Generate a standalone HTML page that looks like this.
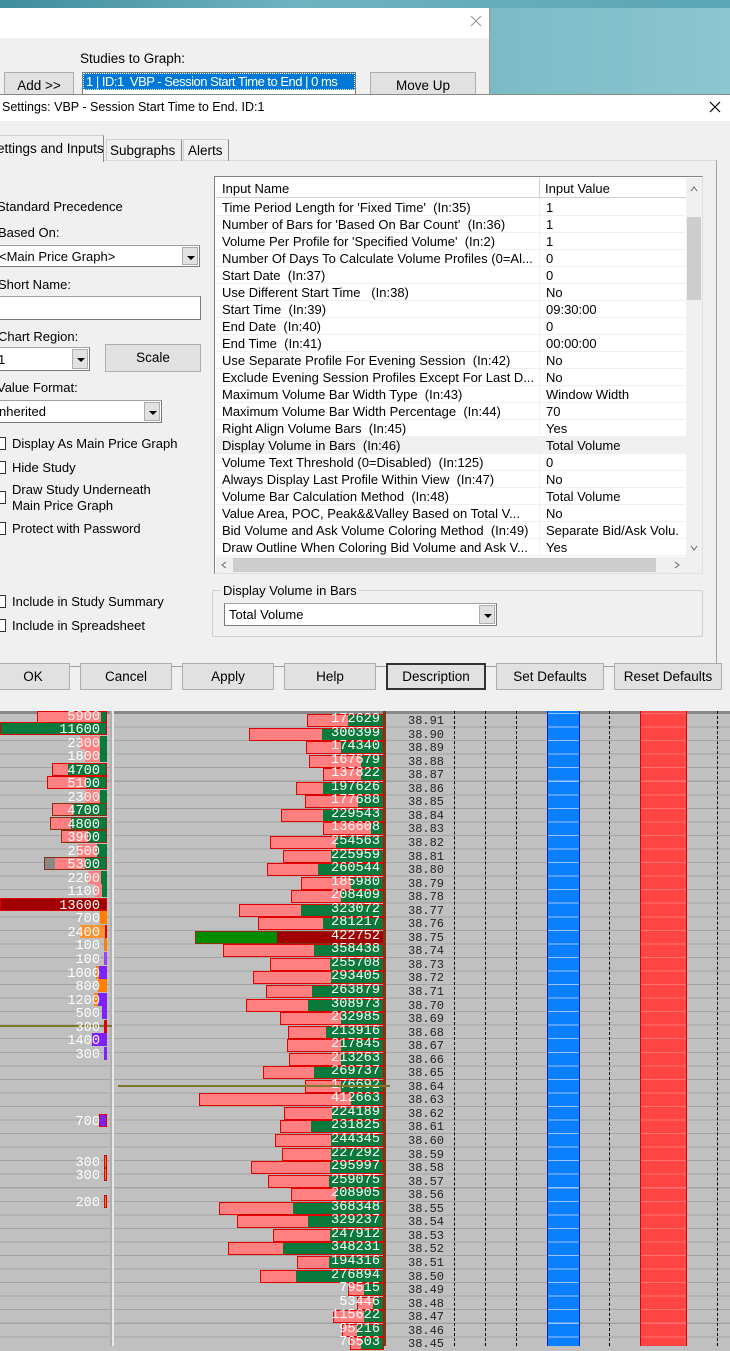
<!DOCTYPE html>
<html><head><meta charset="utf-8">
<style>
*{margin:0;padding:0;box-sizing:border-box}
body{width:730px;height:1346px;overflow:hidden;position:relative;background:#c0c0c0;font-family:"Liberation Sans",Arial,sans-serif;font-size:13px;color:#000}
.a{position:absolute}
.t{position:absolute;white-space:nowrap;line-height:15px}
.btn{position:absolute;background:#e1e1e1;border:1px solid #adadad;text-align:center;line-height:25px;font-size:13.5px}
.cb{position:absolute;width:13px;height:13px;border:1px solid #333;background:#fff;left:-7px}
.combo{position:absolute;background:#fff;border:1px solid #7a7a7a;border-top-color:#a0a0a0}
.arr{position:absolute;right:1px;top:1px;bottom:1px;width:16px;background:#e1e1e1;border:1px solid #adadad}
.arr:after{content:"";position:absolute;left:4px;top:8px;border:4px solid transparent;border-top:4px solid #000;border-bottom:0}
.row{position:absolute;left:0;width:470px;height:17px;line-height:17px;border-bottom:1px solid #f0f0f0;white-space:nowrap}
.row span{position:absolute;left:6px}
.row b{font-weight:normal;position:absolute;left:330px}
.rb{position:absolute;height:13px;border:1px solid #e00000;background:#ff8080}
.g{position:absolute;top:0;bottom:0;right:0;background:#0a7a3c}
.n{position:absolute;right:3px;top:-2px;font-family:"Liberation Mono",monospace;font-size:13.6px;color:#fff;line-height:14px}
.p{position:absolute;left:408px;font-family:"Liberation Mono","DejaVu Sans Mono",monospace;font-size:12px;color:#222;line-height:13px}
.dl{position:absolute;top:711px;height:635px;width:0;border-left:1px dashed #000}
.lb{position:absolute;height:13px}
.ln{position:absolute;right:630px;top:-2px;font-family:"Liberation Mono",monospace;font-size:13.6px;color:#fff;line-height:14px;text-align:right}
</style></head><body>

<div class="a" style="left:0;top:0;width:730px;height:96px;background:linear-gradient(90deg,#5aa2ae 0%,#78b8c4 60%,#8cc6d0 100%)"></div>
<div class="a" style="left:0;top:0;width:730px;height:8px;background:linear-gradient(90deg,#3f8e9c,#6fb2bf 40%,#5aa6b4)"></div>
<div class="a" style="left:0;top:8px;width:490px;height:88px;background:#f0f0f0;border-right:1px solid #999"></div>
<div class="a" style="left:0;top:8px;width:489px;height:30px;background:#fff"></div>
<svg class="a" style="left:470px;top:15px" width="12" height="12"><path d="M1 1L11 11M11 1L1 11" stroke="#999" stroke-width="1.2"/></svg>
<div class="t" style="left:80px;top:51px;font-size:13.5px">Studies to Graph:</div>
<div class="btn" style="left:4px;top:72px;width:70px;height:24px">Add &gt;&gt;</div>
<div class="a" style="left:82px;top:72px;width:274px;height:24px;background:#fff;border:1px solid #7a7a7a"></div>
<div class="a" style="left:83px;top:73px;width:272px;height:17px;background:#0078d7;border:1px dotted #fff;overflow:hidden"><div class="t" style="left:2px;top:0;color:#fff;font-size:13px;letter-spacing:-0.5px">1 | ID:1&nbsp; VBP - Session Start Time to End | 0 ms</div></div>
<div class="btn" style="left:370px;top:72px;width:106px;height:26px">Move Up</div>

<div class="a" style="left:0;top:94px;width:730px;height:618px;background:#f0f0f0;border-top:1px solid #888"></div>
<div class="a" style="left:0;top:95px;width:730px;height:26px;background:#fff"></div>
<div class="t" style="left:2px;top:100px;font-size:12.5px">Settings: VBP - Session Start Time to End. ID:1</div>
<svg class="a" style="left:709px;top:101px" width="12" height="12"><path d="M1 1L11 11M11 1L1 11" stroke="#000" stroke-width="1.2"/></svg>

<div class="a" style="left:0;top:160px;width:717px;height:507px;border:1px solid #d9d9d9;border-right-color:#a0a0a0;border-bottom-color:#a0a0a0;border-left:none"></div>
<div class="a" style="left:-2px;top:135px;width:106px;height:27px;background:#f0f0f0;border:1px solid #d0d0d0;border-right:1px solid #888;border-bottom:none"></div>
<div class="t" style="left:-3px;top:141px;font-size:13.5px">ettings and Inputs</div>
<div class="a" style="left:106px;top:139px;width:76px;height:22px;border:1px solid #d0d0d0;border-right:1px solid #888;border-bottom:none"></div>
<div class="t" style="left:110px;top:143px;font-size:13.5px">Subgraphs</div>
<div class="a" style="left:183px;top:139px;width:46px;height:22px;border:1px solid #d0d0d0;border-right:1px solid #888;border-bottom:none"></div>
<div class="t" style="left:188px;top:143px;font-size:13.5px">Alerts</div>

<div class="t" style="left:-3px;top:199px">Standard Precedence</div>
<div class="t" style="left:-2px;top:225px">Based On:</div>
<div class="combo" style="left:-2px;top:245px;width:202px;height:22px"><div class="arr"></div></div>
<div class="t" style="left:-1px;top:249px">&lt;Main Price Graph&gt;</div>
<div class="t" style="left:-2px;top:277px">Short Name:</div>
<div class="combo" style="left:-2px;top:296px;width:203px;height:24px"></div>
<div class="t" style="left:-2px;top:329px">Chart Region:</div>
<div class="combo" style="left:-2px;top:347px;width:92px;height:24px"><div class="arr"></div></div>
<div class="t" style="left:-2px;top:352px">1</div>
<div class="btn" style="left:105px;top:344px;width:96px;height:28px;line-height:26px">Scale</div>
<div class="t" style="left:-3px;top:380px">Value Format:</div>
<div class="combo" style="left:-2px;top:400px;width:164px;height:23px"><div class="arr"></div></div>
<div class="t" style="left:-1px;top:404px">nherited</div>
<div class="cb" style="top:437px"></div><div class="t" style="left:12px;top:436px">Display As Main Price Graph</div>
<div class="cb" style="top:461px"></div><div class="t" style="left:12px;top:460px">Hide Study</div>
<div class="cb" style="top:491px"></div><div class="t" style="left:12px;top:482px">Draw Study Underneath</div>
<div class="t" style="left:12px;top:498px">Main Price Graph</div>
<div class="cb" style="top:522px"></div><div class="t" style="left:12px;top:521px">Protect with Password</div>
<div class="cb" style="top:595px"></div><div class="t" style="left:12px;top:594px">Include in Study Summary</div>
<div class="cb" style="top:619px"></div><div class="t" style="left:12px;top:618px">Include in Spreadsheet</div>

<div class="a" style="left:214px;top:176px;width:489px;height:398px;background:#fff;border:1px solid #828282;border-right-color:#e0e0e0;border-bottom-color:#e0e0e0"></div>
<div class="a" style="left:216px;top:178px;width:470px;height:20px;background:#fff;border-bottom:1px solid #d0d0d0"></div>
<div class="a" style="left:539px;top:178px;width:1px;height:20px;background:#d0d0d0"></div>
<div class="t" style="left:222px;top:181px">Input Name</div>
<div class="t" style="left:545px;top:181px">Input Value</div>
<div class="a" style="left:216px;top:199px;width:470px;height:358px">
<div class="row" style="top:0"><span>Time Period Length for 'Fixed Time'&nbsp;&nbsp;(In:35)</span><b>1</b></div>
<div class="row" style="top:17px"><span>Number of Bars for 'Based On Bar Count'&nbsp;&nbsp;(In:36)</span><b>1</b></div>
<div class="row" style="top:34px"><span>Volume Per Profile for 'Specified Volume'&nbsp;&nbsp;(In:2)</span><b>1</b></div>
<div class="row" style="top:51px"><span>Number Of Days To Calculate Volume Profiles (0=Al...</span><b>0</b></div>
<div class="row" style="top:68px"><span>Start Date&nbsp;&nbsp;(In:37)</span><b>0</b></div>
<div class="row" style="top:85px"><span>Use Different Start Time&nbsp;&nbsp;&nbsp;(In:38)</span><b>No</b></div>
<div class="row" style="top:102px"><span>Start Time&nbsp;&nbsp;(In:39)</span><b>09:30:00</b></div>
<div class="row" style="top:119px"><span>End Date&nbsp;&nbsp;(In:40)</span><b>0</b></div>
<div class="row" style="top:136px"><span>End Time&nbsp;&nbsp;(In:41)</span><b>00:00:00</b></div>
<div class="row" style="top:153px"><span>Use Separate Profile For Evening Session&nbsp;&nbsp;(In:42)</span><b>No</b></div>
<div class="row" style="top:170px"><span>Exclude Evening Session Profiles Except For Last D...</span><b>No</b></div>
<div class="row" style="top:187px"><span>Maximum Volume Bar Width Type&nbsp;&nbsp;(In:43)</span><b>Window Width</b></div>
<div class="row" style="top:204px"><span>Maximum Volume Bar Width Percentage&nbsp;&nbsp;(In:44)</span><b>70</b></div>
<div class="row" style="top:221px"><span>Right Align Volume Bars&nbsp;&nbsp;(In:45)</span><b>Yes</b></div>
<div class="row" style="top:238px;background:#f0f0f0"><span>Display Volume in Bars&nbsp;&nbsp;(In:46)</span><b>Total Volume</b></div>
<div class="row" style="top:255px"><span>Volume Text Threshold (0=Disabled)&nbsp;&nbsp;(In:125)</span><b>0</b></div>
<div class="row" style="top:272px"><span>Always Display Last Profile Within View&nbsp;&nbsp;(In:47)</span><b>No</b></div>
<div class="row" style="top:289px"><span>Volume Bar Calculation Method&nbsp;&nbsp;(In:48)</span><b>Total Volume</b></div>
<div class="row" style="top:306px"><span>Value Area, POC, Peak&amp;&amp;Valley Based on Total V...</span><b>No</b></div>
<div class="row" style="top:323px"><span>Bid Volume and Ask Volume Coloring Method&nbsp;&nbsp;(In:49)</span><b>Separate Bid/Ask Volu.</b></div>
<div class="row" style="top:340px"><span>Draw Outline When Coloring Bid Volume and Ask V...</span><b>Yes</b></div>
<div class="a" style="left:323px;top:0;width:1px;height:357px;background:#f0f0f0"></div>
</div>
<div class="a" style="left:686px;top:178px;width:16px;height:379px;background:#f0f0f0"></div>
<svg class="a" style="left:690px;top:186px" width="8" height="6"><path d="M1 5L4 1L7 5" stroke="#666" fill="none"/></svg>
<svg class="a" style="left:690px;top:545px" width="8" height="6"><path d="M1 1L4 5L7 1" stroke="#666" fill="none"/></svg>
<div class="a" style="left:687px;top:217px;width:14px;height:83px;background:#cdcdcd"></div>
<div class="a" style="left:216px;top:557px;width:486px;height:16px;background:#f0f0f0"></div>
<div class="a" style="left:233px;top:558px;width:423px;height:14px;background:#cdcdcd"></div>
<svg class="a" style="left:221px;top:561px" width="6" height="8"><path d="M5 1L1 4L5 7" stroke="#666" fill="none"/></svg>
<svg class="a" style="left:674px;top:561px" width="6" height="8"><path d="M1 1L5 4L1 7" stroke="#666" fill="none"/></svg>

<div class="a" style="left:212px;top:590px;width:491px;height:47px;border:1px solid #d0d0d0;border-radius:2px"></div>
<div class="t" style="left:221px;top:583px;background:#f0f0f0;padding:0 2px">Display Volume in Bars</div>
<div class="combo" style="left:224px;top:603px;width:273px;height:23px"><div class="arr"></div></div>
<div class="t" style="left:229px;top:607px">Total Volume</div>

<div class="btn" style="left:-4px;top:663px;width:74px;height:27px">OK</div>
<div class="btn" style="left:80px;top:663px;width:92px;height:27px">Cancel</div>
<div class="btn" style="left:182px;top:663px;width:92px;height:27px">Apply</div>
<div class="btn" style="left:284px;top:663px;width:92px;height:27px">Help</div>
<div class="btn" style="left:386px;top:663px;width:100px;height:27px;border:2px solid #333;line-height:23px">Description</div>
<div class="btn" style="left:496px;top:663px;width:108px;height:27px">Set Defaults</div>
<div class="btn" style="left:614px;top:663px;width:108px;height:27px">Reset Defaults</div>

<div class="a" style="left:0;top:711px;width:730px;height:635px;background:repeating-linear-gradient(to bottom,#a4a4a4 0,#a4a4a4 1px,#c0c0c0 1px,#c0c0c0 13.55px);background-position:0 2px"></div>
<div class="a" style="left:0;top:711px;width:730px;height:3px;background:#888"></div>
<div class="a" style="left:112px;top:711px;width:2px;height:635px;background:#e8e8e8"></div>
<div class="a" style="left:110px;top:711px;width:2px;height:635px;background:#b0b0b0"></div>

<div class="dl" style="left:454px"></div><div class="dl" style="left:485px"></div><div class="dl" style="left:516px"></div><div class="dl" style="left:609px"></div><div class="dl" style="left:717px"></div>
<div class="a" style="left:547px;top:711px;width:33px;height:635px;background:repeating-linear-gradient(to bottom,#9cc4ff 0,#9cc4ff 1px,#0a80ff 1px,#0a80ff 13.55px);background-position:0 2px;border-left:1px solid #0020c0;border-right:1px solid #0020c0"></div>
<div class="a" style="left:640px;top:711px;width:47px;height:635px;background:repeating-linear-gradient(to bottom,#ff7070 0,#ff7070 1px,#ff4444 1px,#ff4444 13.55px);background-position:0 2px;border-left:1px solid #d00;border-right:1px solid #d00"></div>
<div class="a" style="left:383px;top:711px;width:3px;height:635px;background:#7a3a1a"></div>

<div class="rb" style="top:714px;left:307px;width:77px"><div class="g" style="left:40px"></div><div class="n">172629</div></div>
<div class="rb" style="top:728px;left:249px;width:135px"><div class="g" style="left:72px"></div><div class="n">300399</div></div>
<div class="rb" style="top:741px;left:306px;width:78px"><div class="g" style="left:34px"></div><div class="n">174340</div></div>
<div class="rb" style="top:755px;left:309px;width:75px"><div class="g" style="left:51px"></div><div class="n">167679</div></div>
<div class="rb" style="top:768px;left:323px;width:61px"><div class="g" style="left:37px"></div><div class="n">137822</div></div>
<div class="rb" style="top:782px;left:296px;width:88px"><div class="g" style="left:26px"></div><div class="n">197626</div></div>
<div class="rb" style="top:795px;left:305px;width:79px"><div class="g" style="left:52px"></div><div class="n">177688</div></div>
<div class="rb" style="top:809px;left:281px;width:103px"><div class="g" style="left:41px"></div><div class="n">229543</div></div>
<div class="rb" style="top:822px;left:323px;width:61px"><div class="g" style="left:47px"></div><div class="n">136608</div></div>
<div class="rb" style="top:836px;left:270px;width:114px"><div class="g" style="left:65px"></div><div class="n">254563</div></div>
<div class="rb" style="top:850px;left:283px;width:101px"><div class="g" style="left:47px"></div><div class="n">225959</div></div>
<div class="rb" style="top:863px;left:267px;width:117px"><div class="g" style="left:50px"></div><div class="n">260544</div></div>
<div class="rb" style="top:877px;left:301px;width:83px"><div class="g" style="left:49px"></div><div class="n">185980</div></div>
<div class="rb" style="top:890px;left:291px;width:93px"><div class="g" style="left:49px"></div><div class="n">208409</div></div>
<div class="rb" style="top:904px;left:239px;width:145px"><div class="g" style="left:61px"></div><div class="n">323072</div></div>
<div class="rb" style="top:917px;left:258px;width:126px"><div class="g" style="left:64px"></div><div class="n">281217</div></div>
<div class="rb" style="top:931px;left:195px;width:189px;background:#008c00;border-color:#8a3010"><div class="g" style="left:81px;background:#a00000"></div><div class="n">422752</div></div>
<div class="rb" style="top:944px;left:223px;width:161px"><div class="g" style="left:90px"></div><div class="n">358438</div></div>
<div class="rb" style="top:958px;left:270px;width:114px"><div class="g" style="left:59px"></div><div class="n">255708</div></div>
<div class="rb" style="top:971px;left:253px;width:131px"><div class="g" style="left:77px"></div><div class="n">293405</div></div>
<div class="rb" style="top:985px;left:266px;width:118px"><div class="g" style="left:45px"></div><div class="n">263879</div></div>
<div class="rb" style="top:999px;left:246px;width:138px"><div class="g" style="left:61px"></div><div class="n">308973</div></div>
<div class="rb" style="top:1012px;left:280px;width:104px"><div class="g" style="left:60px"></div><div class="n">232985</div></div>
<div class="rb" style="top:1026px;left:288px;width:96px"><div class="g" style="left:37px"></div><div class="n">213916</div></div>
<div class="rb" style="top:1039px;left:287px;width:97px"><div class="g" style="left:53px"></div><div class="n">217845</div></div>
<div class="rb" style="top:1053px;left:289px;width:95px"><div class="g" style="left:51px"></div><div class="n">213263</div></div>
<div class="rb" style="top:1066px;left:263px;width:121px"><div class="g" style="left:50px"></div><div class="n">269737</div></div>
<div class="rb" style="top:1080px;left:305px;width:79px"><div class="g" style="left:35px"></div><div class="n">176692</div></div>
<div class="rb" style="top:1093px;left:199px;width:185px"><div class="g" style="left:151px"></div><div class="n">412663</div></div>
<div class="rb" style="top:1107px;left:284px;width:100px"><div class="g" style="left:47px"></div><div class="n">224189</div></div>
<div class="rb" style="top:1120px;left:280px;width:104px"><div class="g" style="left:30px"></div><div class="n">231825</div></div>
<div class="rb" style="top:1134px;left:275px;width:109px"><div class="g" style="left:55px"></div><div class="n">244345</div></div>
<div class="rb" style="top:1148px;left:282px;width:102px"><div class="g" style="left:48px"></div><div class="n">227292</div></div>
<div class="rb" style="top:1161px;left:251px;width:133px"><div class="g" style="left:78px"></div><div class="n">295997</div></div>
<div class="rb" style="top:1175px;left:268px;width:116px"><div class="g" style="left:60px"></div><div class="n">259075</div></div>
<div class="rb" style="top:1188px;left:291px;width:93px"><div class="g" style="left:44px"></div><div class="n">208905</div></div>
<div class="rb" style="top:1202px;left:219px;width:165px"><div class="g" style="left:73px"></div><div class="n">368348</div></div>
<div class="rb" style="top:1215px;left:237px;width:147px"><div class="g" style="left:70px"></div><div class="n">329237</div></div>
<div class="rb" style="top:1229px;left:273px;width:111px"><div class="g" style="left:56px"></div><div class="n">247912</div></div>
<div class="rb" style="top:1242px;left:228px;width:156px"><div class="g" style="left:54px"></div><div class="n">348231</div></div>
<div class="rb" style="top:1256px;left:297px;width:87px"><div class="g" style="left:31px"></div><div class="n">194316</div></div>
<div class="rb" style="top:1270px;left:260px;width:124px"><div class="g" style="left:35px"></div><div class="n">276894</div></div>
<div class="rb" style="top:1283px;left:348px;width:36px"><div class="g" style="left:15px"></div><div class="n">79515</div></div>
<div class="rb" style="top:1297px;left:357px;width:27px"><div class="g" style="left:15px"></div><div class="n">53446</div></div>
<div class="rb" style="top:1310px;left:333px;width:51px"><div class="g" style="left:30px"></div><div class="n">115622</div></div>
<div class="rb" style="top:1324px;left:342px;width:42px"><div class="g" style="left:14px"></div><div class="n">95216</div></div>
<div class="rb" style="top:1337px;left:350px;width:34px"><div class="g" style="left:10px"></div><div class="n">76503</div></div>
<div class="a" style="left:118px;top:1085px;width:272px;height:2px;background:#807828"></div>
<div class="a" style="left:0;top:1025px;width:112px;height:2px;background:#807828"></div>

<div class="p" style="top:715px">38.91</div><div class="p" style="top:729px">38.90</div><div class="p" style="top:742px">38.89</div><div class="p" style="top:756px">38.88</div><div class="p" style="top:769px">38.87</div><div class="p" style="top:783px">38.86</div><div class="p" style="top:796px">38.85</div><div class="p" style="top:810px">38.84</div><div class="p" style="top:823px">38.83</div><div class="p" style="top:837px">38.82</div><div class="p" style="top:851px">38.81</div><div class="p" style="top:864px">38.80</div><div class="p" style="top:878px">38.79</div><div class="p" style="top:891px">38.78</div><div class="p" style="top:905px">38.77</div><div class="p" style="top:918px">38.76</div><div class="p" style="top:932px">38.75</div><div class="p" style="top:945px">38.74</div><div class="p" style="top:959px">38.73</div><div class="p" style="top:972px">38.72</div><div class="p" style="top:986px">38.71</div><div class="p" style="top:1000px">38.70</div><div class="p" style="top:1013px">38.69</div><div class="p" style="top:1027px">38.68</div><div class="p" style="top:1040px">38.67</div><div class="p" style="top:1054px">38.66</div><div class="p" style="top:1067px">38.65</div><div class="p" style="top:1081px">38.64</div><div class="p" style="top:1094px">38.63</div><div class="p" style="top:1108px">38.62</div><div class="p" style="top:1121px">38.61</div><div class="p" style="top:1135px">38.60</div><div class="p" style="top:1149px">38.59</div><div class="p" style="top:1162px">38.58</div><div class="p" style="top:1176px">38.57</div><div class="p" style="top:1189px">38.56</div><div class="p" style="top:1203px">38.55</div><div class="p" style="top:1216px">38.54</div><div class="p" style="top:1230px">38.53</div><div class="p" style="top:1243px">38.52</div><div class="p" style="top:1257px">38.51</div><div class="p" style="top:1271px">38.50</div><div class="p" style="top:1284px">38.49</div><div class="p" style="top:1298px">38.48</div><div class="p" style="top:1311px">38.47</div><div class="p" style="top:1325px">38.46</div><div class="p" style="top:1338px">38.45</div>

<div class="lb" style="top:711px;left:37px;width:70px;background:#ff8080;border:1px solid #d00"><div class="g" style="left:63px"></div></div>
<div class="lb" style="top:722px;left:0;width:107px;background:#0a7a3c;border:1px solid #d00"></div>
<div class="lb" style="top:736px;left:80px;width:27px;background:#ff8080"><div class="g" style="left:20px"></div></div>
<div class="lb" style="top:749px;left:85px;width:22px;background:#ff8080"><div class="g" style="left:15px"></div></div>
<div class="lb" style="top:763px;left:52px;width:55px;background:#ff8080;border:1px solid #d00"><div class="g" style="left:15px"></div></div>
<div class="lb" style="top:776px;left:47px;width:60px;background:#ff8080;border:1px solid #d00"><div class="g" style="left:38px"></div></div>
<div class="lb" style="top:790px;left:85px;width:22px;background:#ff8080"><div class="g" style="left:15px"></div></div>
<div class="lb" style="top:803px;left:52px;width:55px;background:#ff8080;border:1px solid #8a3010"><div class="g" style="left:20px"></div></div>
<div class="lb" style="top:817px;left:50px;width:57px;background:#ff8080;border:1px solid #8a3010"><div class="g" style="left:20px"></div></div>
<div class="lb" style="top:830px;left:61px;width:46px;background:#ff8080;border:1px solid #8a3010"><div class="g" style="left:26px"></div></div>
<div class="lb" style="top:844px;left:78px;width:29px;background:#ff8080"><div class="g" style="left:19px"></div></div>
<div class="lb" style="top:857px;left:44px;width:63px;background:#ff8080;border:1px solid #8a3010"><div style="position:absolute;left:0;top:0;bottom:0;width:10px;background:#888"></div><div class="g" style="left:40px"></div></div>
<div class="lb" style="top:871px;left:88px;width:19px;background:#ff8080"><div class="g" style="left:13px"></div></div>
<div class="lb" style="top:884px;left:95px;width:12px;background:#ff8080"><div class="g" style="left:7px"></div></div>
<div class="lb" style="top:898px;left:0;width:107px;background:#a00000;border:1px solid #d00"></div>
<div class="lb" style="top:911px;left:100px;width:7px;background:#ff8000"></div>
<div class="lb" style="top:925px;left:80px;width:27px;background:#ff9030;border-right:2px solid #d00"></div>
<div class="lb" style="top:938px;left:104px;width:3px;background:#ff8000"></div>
<div class="lb" style="top:952px;left:104px;width:3px;background:#a040ff"></div>
<div class="lb" style="top:966px;left:96px;width:11px;background:#8020ff;border-left:3px solid #ff8000"></div>
<div class="lb" style="top:979px;left:98px;width:9px;background:#ff8000"></div>
<div class="lb" style="top:993px;left:94px;width:13px;background:#8020ff;border-left:4px solid #ff8000"></div>
<div class="lb" style="top:1006px;left:102px;width:5px;background:#8020ff"></div>
<div class="lb" style="top:1020px;left:104px;width:3px;background:#d00"></div>
<div class="lb" style="top:1033px;left:92px;width:15px;background:#8020ff"></div>
<div class="lb" style="top:1047px;left:104px;width:3px;background:#8020ff"></div>
<div class="lb" style="top:1114px;left:99px;width:8px;background:#8020ff;border:1px solid #d00"></div>
<div class="lb" style="top:1155px;left:104px;width:3px;background:#ff8000;border:1px solid #d00"></div>
<div class="lb" style="top:1168px;left:104px;width:3px;background:#ff8000;border:1px solid #d00"></div>
<div class="lb" style="top:1195px;left:104px;width:3px;background:#ff8000;border:1px solid #d00"></div>

<div class="ln" style="top:711px">5900</div>
<div class="ln" style="top:724px">11600</div>
<div class="ln" style="top:738px">2300</div>
<div class="ln" style="top:751px">1800</div>
<div class="ln" style="top:765px">4700</div>
<div class="ln" style="top:778px">5100</div>
<div class="ln" style="top:792px">2300</div>
<div class="ln" style="top:805px">4700</div>
<div class="ln" style="top:819px">4800</div>
<div class="ln" style="top:832px">3900</div>
<div class="ln" style="top:846px">2500</div>
<div class="ln" style="top:859px">5300</div>
<div class="ln" style="top:873px">2200</div>
<div class="ln" style="top:886px">1100</div>
<div class="ln" style="top:900px">13600</div>
<div class="ln" style="top:913px">700</div>
<div class="ln" style="top:927px">2400</div>
<div class="ln" style="top:940px">100</div>
<div class="ln" style="top:954px">100</div>
<div class="ln" style="top:968px">1000</div>
<div class="ln" style="top:981px">800</div>
<div class="ln" style="top:995px">1200</div>
<div class="ln" style="top:1008px">500</div>
<div class="ln" style="top:1022px">300</div>
<div class="ln" style="top:1035px">1400</div>
<div class="ln" style="top:1049px">300</div>
<div class="ln" style="top:1116px">700</div>
<div class="ln" style="top:1157px">300</div>
<div class="ln" style="top:1170px">300</div>
<div class="ln" style="top:1197px">200</div>
</body></html>
